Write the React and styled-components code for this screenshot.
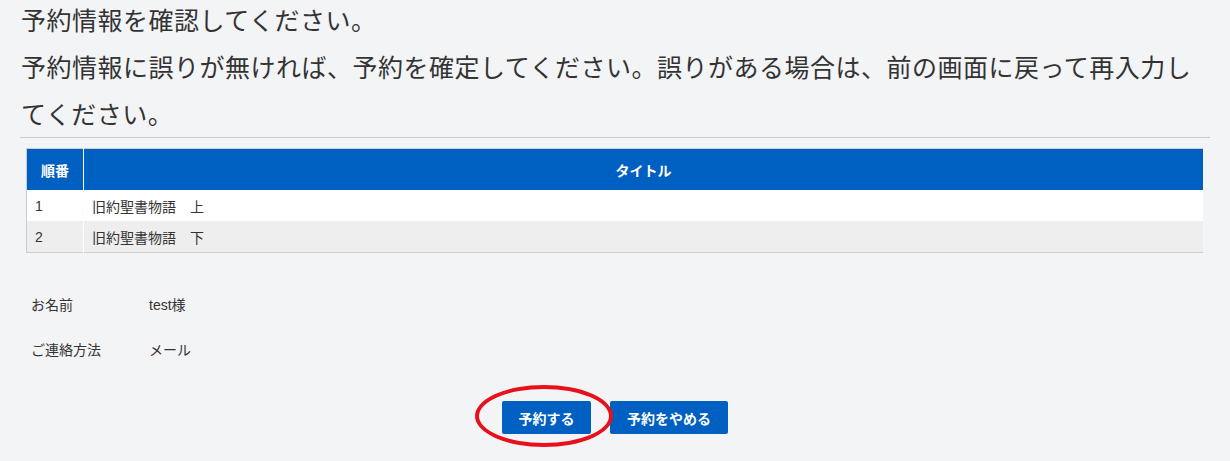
import React from 'react';
import styled, { createGlobalStyle } from 'styled-components';

const GlobalStyle = createGlobalStyle`
  body {
    margin: 0;
    background: #f3f4f6;
    color: #333;
    font-family: "Liberation Sans", "Noto Sans CJK JP", sans-serif;
  }
`;

const Page = styled.div`
  padding: 0 20px 20px;
  overflow: hidden;
`;

const Lead = styled.p`
  margin: -4px 0 0;
  padding-left: 1px;
  font-family: "Noto Sans CJK JP", sans-serif;
  font-size: 25px;
  letter-spacing: 0.5px;
  line-height: 47px;
  color: #333;
`;

const Divider = styled.hr`
  margin: 0;
  border: 0;
  border-top: 1px solid #cccccc;
`;

const Table = styled.table`
  margin: 10px 7px 0 6px;
  width: calc(100% - 13px);
  border-collapse: collapse;
  border-top: 1px solid #cccccc;
  border-bottom: 1px solid #cccccc;
  border-left: 1px solid #cccccc;
  font-size: 14px;
`;

const Th = styled.th`
  height: 41px;
  padding: 0 8px;
  background: #0060c1;
  color: #fff;
  font-weight: bold;
  text-align: center;
  width: ${p => p.$narrow ? '40px' : 'auto'};
  border-right: ${p => p.$narrow ? '1px solid #fff' : 'none'};
`;

const Row = styled.tr`
  background: ${p => p.$alt ? '#eeeeee' : '#ffffff'};
`;

const Td = styled.td`
  height: 31px;
  padding: 0 8px;
  color: #333;
  border-right: ${p => p.$first ? '1px solid #fff' : 'none'};
`;

const Info = styled.dl`
  display: grid;
  grid-template-columns: 118px 1fr;
  grid-auto-rows: 45px;
  align-items: center;
  margin: 28px 0 0;
  padding-left: 11px;
  font-size: 14px;
`;

const Label = styled.dt`
  margin: 0;
`;

const Value = styled.dd`
  margin: 0;
`;

const Actions = styled.div`
  display: flex;
  justify-content: center;
  gap: 19px;
  margin-top: 30px;
`;

const Marked = styled.span`
  position: relative;
  display: inline-flex;
`;

const Circle = styled.span`
  position: absolute;
  left: -27px;
  top: -16px;
  width: 130px;
  height: 54px;
  border: 4px solid #e8101a;
  border-radius: 50%;
  pointer-events: none;
`;

const Button = styled.button`
  height: 33px;
  width: ${p => p.$width}px;
  padding: 0;
  border: 0;
  border-radius: 2px;
  background: #0060c1;
  color: #fff;
  font-family: "Noto Sans CJK JP", sans-serif;
  font-size: 14px;
  font-weight: bold;
  cursor: pointer;
`;

const books = ['旧約聖書物語\u3000上', '旧約聖書物語\u3000下'];

export default function App() {
  return (
    <Page>
      <GlobalStyle />
      <Lead>
        予約情報を確認してください。<br />
        予約情報に誤りが無ければ、予約を確定してください。誤りがある場合は、前の画面に戻って再入力してください。
      </Lead>
      <Divider />
      <Table>
        <thead>
          <tr>
            <Th $narrow>順番</Th>
            <Th>タイトル</Th>
          </tr>
        </thead>
        <tbody>
          {books.map((title, i) => (
            <Row key={i} $alt={i % 2 === 1}>
              <Td $first>{i + 1}</Td>
              <Td>{title}</Td>
            </Row>
          ))}
        </tbody>
      </Table>
      <Info>
        <Label>お名前</Label>
        <Value>test様</Value>
        <Label>ご連絡方法</Label>
        <Value>メール</Value>
      </Info>
      <Actions>
        <Marked>
          <Button $width={89}>予約する</Button>
          <Circle />
        </Marked>
        <Button $width={118}>予約をやめる</Button>
      </Actions>
    </Page>
  );
}
